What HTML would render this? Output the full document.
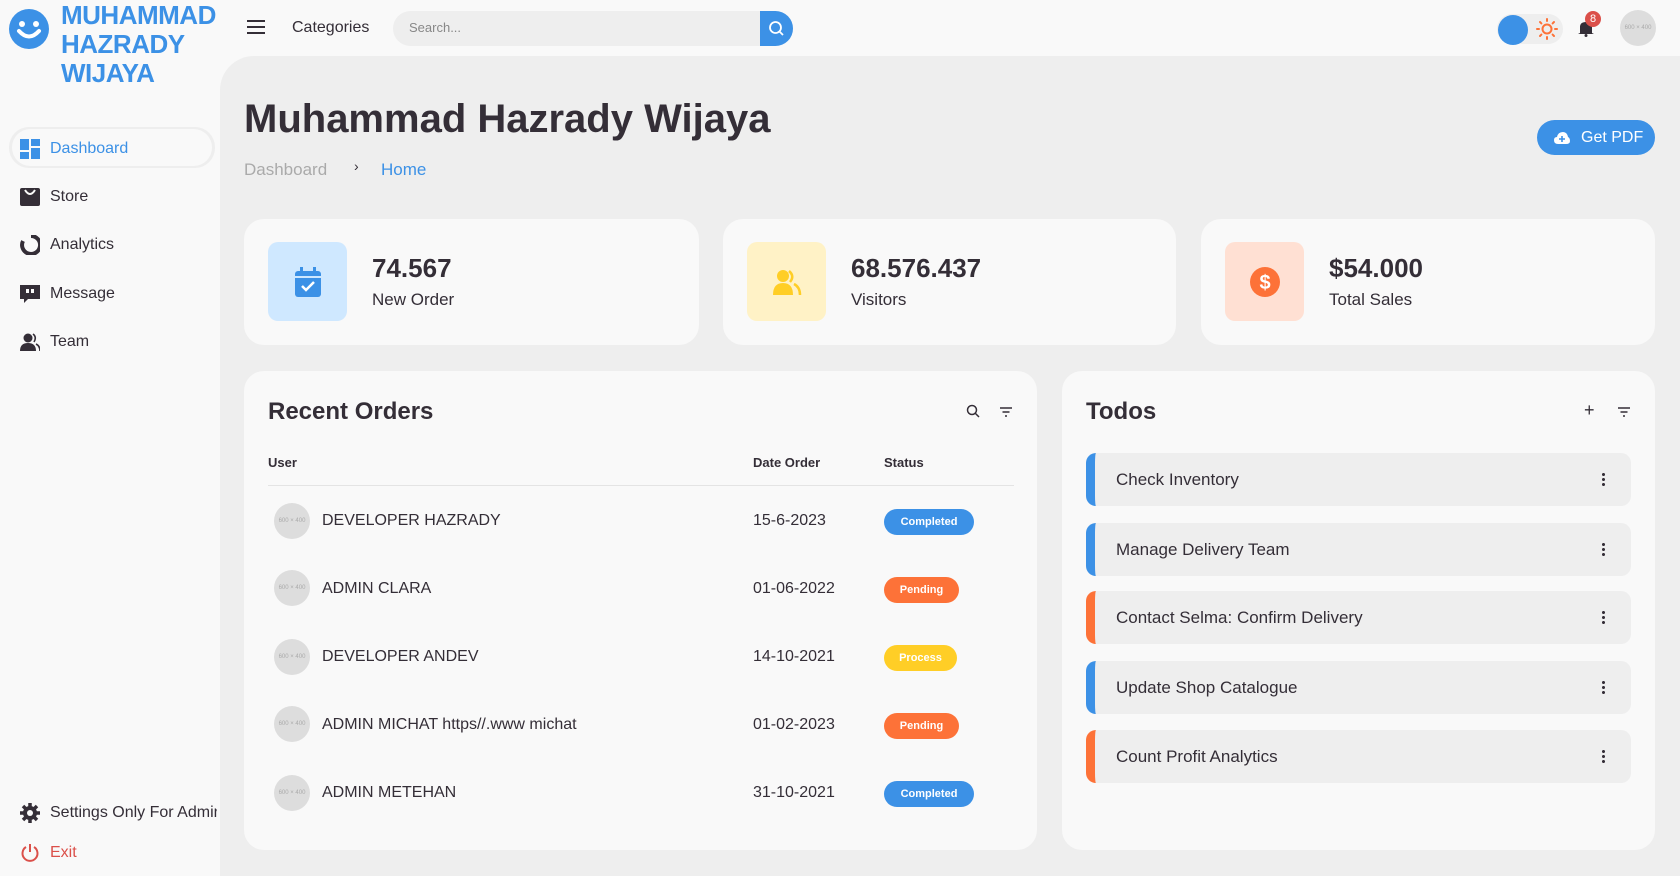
<!DOCTYPE html>
<html><head><meta charset="utf-8"><style>
*{margin:0;padding:0;box-sizing:border-box}
body{width:1680px;height:876px;overflow:hidden;background:#f9f9f9;font-family:"Liberation Sans",sans-serif;color:#342e37;position:relative}
.a{position:absolute}
.main{left:220px;top:56px;width:1460px;height:820px;background:#eee;border-top-left-radius:34px}
.logo{left:61px;top:1px;color:#3c91e6;font-size:26px;font-weight:bold;line-height:29px;letter-spacing:-0.5px}
.nav{left:20px;font-size:16px;display:flex;align-items:center;gap:10px}
.card{background:#f9f9f9;border-radius:20px}
.ib{width:79px;height:79px;border-radius:10px;display:flex;align-items:center;justify-content:center}
.num{font-size:26px;font-weight:bold}
.lbl{font-size:17px;margin-top:6px}
.av{width:36px;height:36px;border-radius:50%;background:#ddd;color:#aaa;font-size:6px;display:flex;align-items:center;justify-content:center}
.badge{height:26px;border-radius:13px;color:#fff;font-size:11px;font-weight:bold;display:flex;align-items:center;justify-content:center}
.todo{left:1086px;width:545px;height:53px;background:#eee;border-radius:10px;font-size:17px;display:flex;align-items:center;padding-left:21px}
.todo .dot{position:absolute;right:26px;top:19px;width:3px;height:15px;background:radial-gradient(circle,#342e37 1.4px,transparent 1.6px) 0 0/3px 5px}
</style></head><body>
<div class="a main"></div>
<svg class="a" style="left:9px;top:9px" width="40" height="40" viewBox="0 0 40 40"><circle cx="20" cy="20" r="20" fill="#3c91e6"/><circle cx="13" cy="15" r="3" fill="#fff"/><circle cx="27" cy="15" r="3" fill="#fff"/><path d="M10 22 Q20 33 30 22" stroke="#fff" stroke-width="4" fill="none" stroke-linecap="round"/></svg>
<div class="a logo">MUHAMMAD<br>HAZRADY<br>WIJAYA</div>
<svg class="a" style="left:247px;top:19px" width="18" height="16"><path d="M0 2h18M0 8h18M0 14h18" stroke="#342e37" stroke-width="2"/></svg>
<div class="a" style="left:292px;top:19px;font-size:16px">Categories</div>
<div class="a" style="left:393px;top:11px;width:400px;height:35px;background:#eee;border-radius:18px"></div>
<div class="a" style="left:409px;top:20px;font-size:13px;color:#888">Search...</div>
<div class="a" style="left:760px;top:11px;width:33px;height:35px;background:#3c91e6;border-radius:0 18px 18px 0"></div>
<svg class="a" style="left:768px;top:20px" width="17" height="17"><circle cx="7.5" cy="7.5" r="5.5" stroke="#fff" stroke-width="1.8" fill="none"/><path d="M11.5 11.5L15 15" stroke="#fff" stroke-width="1.8"/></svg>
<div class="a" style="left:1497px;top:14px;width:66px;height:30px;background:#eee;border-radius:15px"></div>
<div class="a" style="left:1498px;top:15px;width:30px;height:30px;background:#3c91e6;border-radius:50%"></div>
<svg class="a" style="left:1536px;top:18px" width="22" height="22" viewBox="0 0 22 22"><circle cx="11" cy="11" r="4.5" stroke="#fd7238" stroke-width="2" fill="none"/><g stroke="#fd7238" stroke-width="2" stroke-linecap="round"><path d="M11 1v2M11 19v2M1 11h2M19 11h2M4 4l1.4 1.4M16.6 16.6L18 18M4 18l1.4-1.4M16.6 5.4L18 4"/></g></svg>
<svg class="a" style="left:1577px;top:19px" width="18" height="18" viewBox="0 0 18 18"><path d="M3 14 L3 8 Q3 3 9 3 Q15 3 15 8 L15 14 L17 15 L1 15 Z" fill="#342e37"/><circle cx="9" cy="16.5" r="1.5" fill="#342e37"/></svg>
<div class="a" style="left:1585px;top:11px;width:16px;height:16px;border-radius:50%;background:#db504a;color:#fff;font-size:11px;text-align:center;line-height:16px">8</div>
<div class="a av" style="left:1620px;top:10px">600 × 400</div>
<div class="a" style="left:9px;top:127px;width:206px;height:41px;background:#eee;border-radius:20px"></div>
<div class="a" style="left:12px;top:129px;width:200px;height:37px;background:#f9f9f9;border-radius:19px"></div>
<div class="a nav" style="top:139px;color:#3c91e6"><svg width="20" height="20"><rect x="0" y="0" width="9" height="11" fill="#3c91e6"/><rect x="11" y="0" width="9" height="7" fill="#3c91e6"/><rect x="0" y="13" width="9" height="7" fill="#3c91e6"/><rect x="11" y="9" width="9" height="11" fill="#3c91e6"/></svg>Dashboard</div>
<div class="a nav" style="top:187px"><svg width="20" height="20"><rect x="0" y="1" width="20" height="18" rx="2" fill="#342e37"/><path d="M5 3 Q10 11 15 3" stroke="#f9f9f9" stroke-width="2" fill="none"/></svg>Store</div>
<div class="a nav" style="top:235px"><svg width="20" height="20"><path d="M11 1 A9 9 0 1 1 3 6" stroke="#342e37" stroke-width="4" fill="none"/></svg>Analytics</div>
<div class="a nav" style="top:284px"><svg width="20" height="20"><path d="M0 1h20v14H8l-4 4v-4H0z" fill="#342e37"/><rect x="6" y="5" width="3" height="4" fill="#f9f9f9"/><rect x="11" y="5" width="3" height="4" fill="#f9f9f9"/></svg>Message</div>
<div class="a nav" style="top:332px"><svg width="20" height="20"><circle cx="8" cy="6" r="4.5" fill="#342e37"/><path d="M0 19 Q0 11 8 11 Q16 11 16 19Z" fill="#342e37"/><path d="M13 2 Q17 5 14 10 M16 12 Q20 14 20 19" stroke="#342e37" stroke-width="1.6" fill="none"/></svg>Team</div>
<div class="a nav" style="top:803px;white-space:nowrap;width:197px;overflow:hidden"><svg width="20" height="20" viewBox="0 0 20 20" style="flex:none"><circle cx="10" cy="10" r="7" fill="#342e37"/><g stroke="#342e37" stroke-width="3.5"><path d="M10 0v20M0 10h20M3 3l14 14M17 3L3 17"/></g><circle cx="10" cy="10" r="3" fill="#f9f9f9"/></svg>Settings Only For Admin</div>
<div class="a nav" style="top:843px;color:#db504a"><svg width="20" height="20"><path d="M6 4 A7.5 7.5 0 1 0 14 4" stroke="#db504a" stroke-width="2" fill="none"/><path d="M10 1v8" stroke="#db504a" stroke-width="2"/></svg>Exit</div>
<div class="a" style="left:244px;top:97px;font-size:40px;font-weight:bold">Muhammad Hazrady Wijaya</div>
<div class="a" style="left:244px;top:160px;font-size:17px;color:#aaa">Dashboard</div>
<div class="a" style="left:354px;top:158px;font-size:14px">›</div>
<div class="a" style="left:381px;top:160px;font-size:17px;color:#3c91e6">Home</div>
<div class="a" style="left:1537px;top:120px;width:118px;height:35px;background:#3c91e6;border-radius:18px;color:#fff;font-size:16px;display:flex;align-items:center;padding-left:17px;gap:11px"><svg width="16" height="12"><path d="M4 12 Q0 12 0 8 Q0 5 3 5 Q4 0 9 0 Q13 0 14 5 Q16 6 16 9 Q16 12 12 12Z" fill="#fff"/><path d="M8 4v6M5 7h6" stroke="#3c91e6" stroke-width="1.6"/></svg>Get PDF</div>
<div class="a card" style="left:244px;top:219px;width:455px;height:126px"></div>
<div class="a card" style="left:723px;top:219px;width:453px;height:126px"></div>
<div class="a card" style="left:1201px;top:219px;width:454px;height:126px"></div>
<div class="a ib" style="left:268px;top:242px;background:#cfe8ff"><svg width="28" height="32" viewBox="0 0 28 32"><rect x="1" y="5" width="26" height="26" rx="3" fill="#3c91e6"/><rect x="6" y="1" width="3" height="7" fill="#3c91e6"/><rect x="19" y="1" width="3" height="7" fill="#3c91e6"/><rect x="1" y="10" width="26" height="2" fill="#cfe8ff"/><path d="M8 20l4 4 8-8" stroke="#fff" stroke-width="2.5" fill="none"/></svg></div>
<div class="a" style="left:372px;top:253px"><div class="num">74.567</div><div class="lbl">New Order</div></div>
<div class="a ib" style="left:747px;top:242px;background:#fff2c6"><svg width="30" height="28" viewBox="0 0 30 28"><circle cx="11" cy="8" r="6" fill="#ffce26"/><path d="M1 27 Q1 15 11 15 Q21 15 21 27Z" fill="#ffce26"/><path d="M17 3 Q23 8 18 14 M22 16 Q28 19 28 27" stroke="#ffce26" stroke-width="2.5" fill="none"/></svg></div>
<div class="a" style="left:851px;top:253px"><div class="num">68.576.437</div><div class="lbl">Visitors</div></div>
<div class="a ib" style="left:1225px;top:242px;background:#ffe0d3"><svg width="30" height="30"><circle cx="15" cy="15" r="15" fill="#fd7238"/><text x="15" y="22" text-anchor="middle" font-family="Liberation Sans" font-weight="bold" font-size="20" fill="#fff">$</text></svg></div>
<div class="a" style="left:1329px;top:253px"><div class="num">$54.000</div><div class="lbl">Total Sales</div></div>
<div class="a card" style="left:244px;top:371px;width:793px;height:479px"></div>
<div class="a" style="left:268px;top:398px;font-size:24px;font-weight:bold">Recent Orders</div>
<svg class="a" style="left:966px;top:404px" width="15" height="15"><circle cx="6" cy="6" r="4.5" stroke="#342e37" stroke-width="1.5" fill="none"/><path d="M9.5 9.5L13 13" stroke="#342e37" stroke-width="1.5"/></svg>
<svg class="a" style="left:1000px;top:407px" width="12" height="10"><path d="M0 1h12M2.5 5h7M5 9h2" stroke="#342e37" stroke-width="1.5"/></svg>
<div class="a" style="left:268px;top:455px;font-size:13px;font-weight:bold">User</div>
<div class="a" style="left:753px;top:455px;font-size:13px;font-weight:bold">Date Order</div>
<div class="a" style="left:884px;top:455px;font-size:13px;font-weight:bold">Status</div>
<div class="a" style="left:268px;top:485px;width:746px;height:1px;background:#e4e4e4"></div>
<div class="a av" style="left:274px;top:503px">600 × 400</div><div class="a" style="left:322px;top:512px;font-size:16px">DEVELOPER HAZRADY</div><div class="a" style="left:753px;top:512px;font-size:16px">15-6-2023</div><div class="a badge" style="left:884px;top:509px;width:90px;background:#3c91e6">Completed</div>
<div class="a av" style="left:274px;top:570px">600 × 400</div><div class="a" style="left:322px;top:580px;font-size:16px">ADMIN CLARA</div><div class="a" style="left:753px;top:580px;font-size:16px">01-06-2022</div><div class="a badge" style="left:884px;top:577px;width:75px;background:#fd7238">Pending</div>
<div class="a av" style="left:274px;top:639px">600 × 400</div><div class="a" style="left:322px;top:648px;font-size:16px">DEVELOPER ANDEV</div><div class="a" style="left:753px;top:648px;font-size:16px">14-10-2021</div><div class="a badge" style="left:884px;top:645px;width:73px;background:#ffce26">Process</div>
<div class="a av" style="left:274px;top:706px">600 × 400</div><div class="a" style="left:322px;top:716px;font-size:16px">ADMIN MICHAT https//.www michat</div><div class="a" style="left:753px;top:716px;font-size:16px">01-02-2023</div><div class="a badge" style="left:884px;top:713px;width:75px;background:#fd7238">Pending</div>
<div class="a av" style="left:274px;top:775px">600 × 400</div><div class="a" style="left:322px;top:784px;font-size:16px">ADMIN METEHAN</div><div class="a" style="left:753px;top:784px;font-size:16px">31-10-2021</div><div class="a badge" style="left:884px;top:781px;width:90px;background:#3c91e6">Completed</div>
<div class="a card" style="left:1062px;top:371px;width:593px;height:479px"></div>
<div class="a" style="left:1086px;top:398px;font-size:24px;font-weight:bold">Todos</div>
<div class="a" style="left:1584px;top:400px;font-size:18px">+</div>
<svg class="a" style="left:1618px;top:407px" width="12" height="10"><path d="M0 1h12M2.5 5h7M5 9h2" stroke="#342e37" stroke-width="1.5"/></svg>
<div class="a todo" style="top:453px;border-left:9px solid #3c91e6">Check Inventory<span class="dot"></span></div>
<div class="a todo" style="top:523px;border-left:9px solid #3c91e6">Manage Delivery Team<span class="dot"></span></div>
<div class="a todo" style="top:591px;border-left:9px solid #fd7238">Contact Selma: Confirm Delivery<span class="dot"></span></div>
<div class="a todo" style="top:661px;border-left:9px solid #3c91e6">Update Shop Catalogue<span class="dot"></span></div>
<div class="a todo" style="top:730px;border-left:9px solid #fd7238">Count Profit Analytics<span class="dot"></span></div>
</body></html>
